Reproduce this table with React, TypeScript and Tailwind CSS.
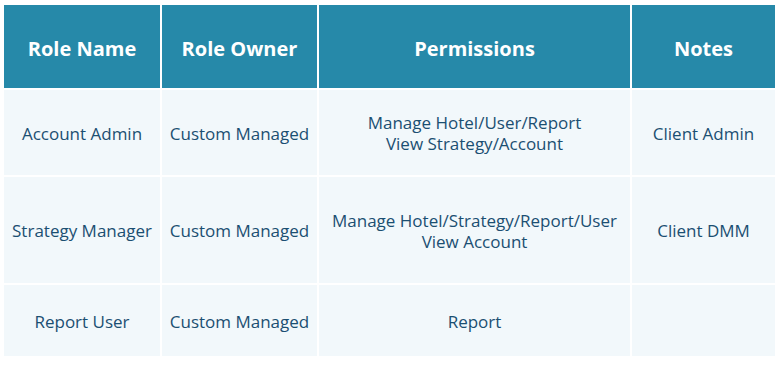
const HEADERS = ['Role Name', 'Role Owner', 'Permissions', 'Notes'];

const ROWS: { h: string; cells: string[][] }[] = [
  {
    h: 'h-[85px]',
    cells: [['Account Admin'], ['Custom Managed'], ['Manage Hotel/User/Report', 'View Strategy/Account'], ['Client Admin']],
  },
  {
    h: 'h-[106px]',
    cells: [
      ['Strategy Manager'],
      ['Custom Managed'],
      ['Manage Hotel/Strategy/Report/User', 'View Account'],
      ['Client DMM'],
    ],
  },
  {
    h: 'h-[71px]',
    cells: [['Report User'], ['Custom Managed'], ['Report'], []],
  },
];

export default function App() {
  return (
    <div className="h-[369px] w-[779px] bg-white pl-[4px] pt-[5px] font-['Open_Sans',sans-serif]">
      <div className="grid w-[771px] grid-cols-[156px_155px_311px_143px] gap-[2px]">
        {HEADERS.map((h) => (
          <div
            key={h}
            className="flex h-[83px] items-center justify-center bg-[#2689a9] pt-[4px] text-[20px] font-bold text-white"
          >
            {h}
          </div>
        ))}
        {ROWS.map((row, i) =>
          row.cells.map((lines, j) => (
            <div
              key={`${i}-${j}`}
              className={`${row.h} flex flex-col items-center justify-center bg-[#f2f8fb] pt-[1px] text-center text-[17px] leading-[21px] text-[#1b4f72]`}
            >
              {lines.map((l) => (
                <span key={l}>{l}</span>
              ))}
            </div>
          )),
        )}
      </div>
    </div>
  );
}
